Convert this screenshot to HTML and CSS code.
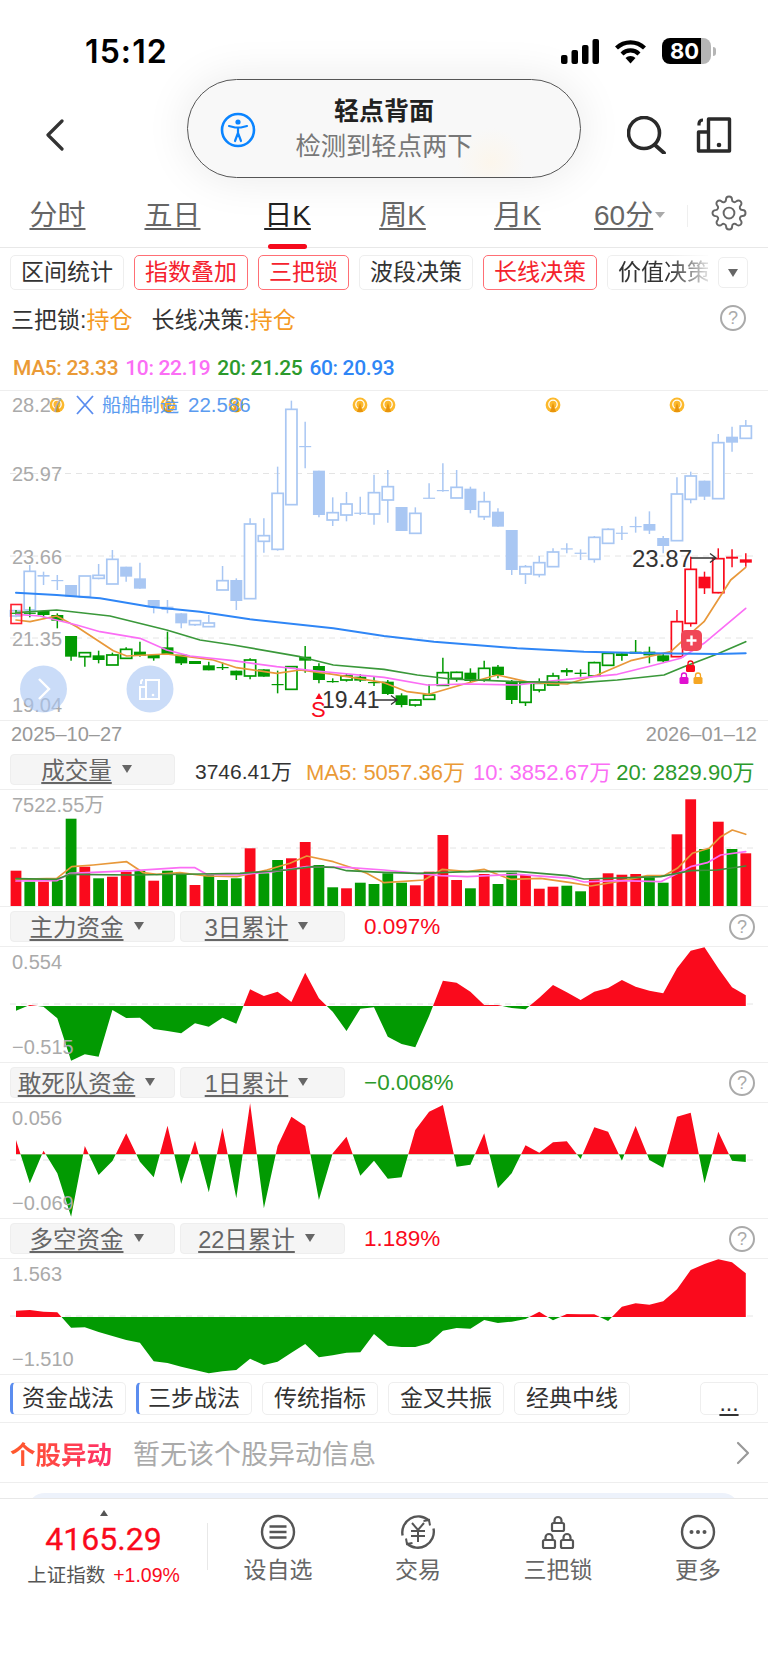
FILE: index.html
```html
<!DOCTYPE html>
<html lang="zh">
<head>
  <meta charset="UTF-8">
  <meta name="viewport" content="width=device-width, initial-scale=1.0">
  <link rel="stylesheet" href="styles.css">
</head>
<body>
  <div class="status-bar">
    <span class="time">15:12</span>
    <div class="status-icons">
      <svg width="38" height="25" viewBox="0 0 38 25"><rect x="0" y="16" width="6.5" height="9" rx="2"/><rect x="10.5" y="11" width="6.5" height="14" rx="2"/><rect x="21" y="6" width="6.5" height="19" rx="2"/><rect x="31.5" y="0" width="6.5" height="25" rx="2"/></svg>
      <svg width="33" height="25" viewBox="0 0 33 25"><path d="M2.5 9a20 20 0 0 1 28 0M8 15a12 12 0 0 1 17 0" fill="none" stroke="#000" stroke-width="4.2"/><path d="M11.5 19a7 7 0 0 1 10 0L16.5 24.5z"/></svg>
      <div class="battery"><div class="battery-body"><span>80</span></div><div class="battery-nub"></div></div>
    </div>
  </div>

  <div class="nav">
    <svg class="back" width="20" height="32" viewBox="0 0 20 32"><path d="M17 2L3 16l14 14" fill="none" stroke="#333" stroke-width="3.2" stroke-linecap="round" stroke-linejoin="round"/></svg>
    <div class="nav-right">
      <svg width="40" height="38" viewBox="0 0 40 38"><circle cx="17" cy="17" r="15.5" fill="none" stroke="#2a2a2a" stroke-width="3.6"/><path d="M28 29l9 8" stroke="#2a2a2a" stroke-width="3.8" stroke-linecap="round"/></svg>
      <svg width="36" height="36" viewBox="0 0 36 36"><path d="M12.5 2h21v32h-31V15h10zM12.5 15v19" fill="none" stroke="#2a2a2a" stroke-width="3.4" stroke-linejoin="round"/><path d="M3 8.5V6.5a4 4 0 0 1 4-3.5" fill="none" stroke="#2a2a2a" stroke-width="3.2"/><circle cx="23" cy="28" r="2.3" fill="#2a2a2a"/></svg>
    </div>
    <div class="pill">
      <svg class="pill-icon" width="36" height="36" viewBox="0 0 36 36"><circle cx="18" cy="18" r="16" fill="none" stroke="#0a84ff" stroke-width="2.6"/><circle cx="18" cy="10" r="2.6" fill="#0a84ff"/><path d="M9 14l6 1.5h6l6-1.5M18 15.5v6M18 21l-3 8M18 21l3 8" fill="none" stroke="#0a84ff" stroke-width="2.2" stroke-linecap="round"/></svg>
      <div class="pill-title">轻点背面</div>
      <div class="pill-sub">检测到轻点两下</div>
    </div>
  </div>

  <div class="tabs">
    <a class="tab">分时</a>
    <a class="tab">五日</a>
    <a class="tab tab-active">日K</a>
    <a class="tab">周K</a>
    <a class="tab">月K</a>
    <a class="tab tab-more">60分</a>
    <span class="tab-caret"></span>
    <span class="tab-sep"></span>
    <svg class="gear" width="36" height="36" viewBox="0 0 24 24" fill="none" stroke="#666" stroke-width="1.3"><circle cx="12" cy="12" r="3.6"/><path d="M19.4 15a1.65 1.65 0 0 0 .33 1.82l.06.06a2 2 0 0 1 0 2.83 2 2 0 0 1-2.83 0l-.06-.06a1.65 1.65 0 0 0-1.82-.33 1.65 1.65 0 0 0-1 1.51V21a2 2 0 0 1-2 2 2 2 0 0 1-2-2v-.09A1.65 1.65 0 0 0 9 19.4a1.65 1.65 0 0 0-1.82.33l-.06.06a2 2 0 0 1-2.83 0 2 2 0 0 1 0-2.83l.06-.06a1.65 1.65 0 0 0 .33-1.82 1.65 1.65 0 0 0-1.51-1H3a2 2 0 0 1-2-2 2 2 0 0 1 2-2h.09A1.65 1.65 0 0 0 4.6 9a1.65 1.65 0 0 0-.33-1.82l-.06-.06a2 2 0 0 1 0-2.83 2 2 0 0 1 2.83 0l.06.06a1.65 1.65 0 0 0 1.82.33H9a1.65 1.65 0 0 0 1-1.51V3a2 2 0 0 1 2-2 2 2 0 0 1 2 2v.09a1.65 1.65 0 0 0 1 1.51 1.65 1.65 0 0 0 1.82-.33l.06-.06a2 2 0 0 1 2.83 0 2 2 0 0 1 0 2.83l-.06.06a1.65 1.65 0 0 0-.33 1.82V9a1.65 1.65 0 0 0 1.51 1H21a2 2 0 0 1 2 2 2 2 0 0 1-2 2h-.09a1.65 1.65 0 0 0-1.51 1z"/></svg>
  </div>

  <div class="chips">
    <span class="chip">区间统计</span>
    <span class="chip chip-red">指数叠加</span>
    <span class="chip chip-red">三把锁</span>
    <span class="chip">波段决策</span>
    <span class="chip chip-red">长线决策</span>
    <span class="chip chip-fade">价值决策</span>
    <span class="chip-caret"><i class="tri"></i></span>
  </div>

  <div class="signals">
    <span>三把锁:<b>持仓</b></span>
    <span class="signal-gap">长线决策:<b>持仓</b></span>
    <span class="help help-top">?</span>
  </div>

  <div class="ma-row">
    <span class="c-orange">MA5: 23.33</span>
    <span class="c-pink">10: 22.19</span>
    <span class="c-green">20: 21.25</span>
    <span class="c-blue">60: 20.93</span>
  </div>

  <svg id="kline" class="plot plot-top" width="768" height="329" viewBox="0 391 768 329"></svg>

  <div class="dates"><span>2025–10–27</span><span>2026–01–12</span></div>

  <div class="panel-head">
    <span class="sel"><u>成交量</u><i class="tri"></i></span>
    <span class="vol-now">3746.41万</span>
    <span class="vol-ma c-orange">MA5: 5057.36万</span>
    <span class="vol-ma c-pink">10: 3852.67万</span>
    <span class="vol-ma c-green">20: 2829.90万</span>
  </div>
  <svg id="volume" class="plot" width="768" height="116" viewBox="0 790 768 116"></svg>

  <div class="panel-head">
    <span class="sel"><u>主力资金</u><i class="tri"></i></span>
    <span class="sel"><u>3日累计</u><i class="tri"></i></span>
    <span class="pct c-red">0.097%</span>
    <span class="help">?</span>
  </div>
  <svg id="fund1" class="plot" width="768" height="115" viewBox="0 947 768 115"></svg>

  <div class="panel-head">
    <span class="sel"><u>敢死队资金</u><i class="tri"></i></span>
    <span class="sel"><u>1日累计</u><i class="tri"></i></span>
    <span class="pct c-green">−0.008%</span>
    <span class="help">?</span>
  </div>
  <svg id="fund2" class="plot" width="768" height="115" viewBox="0 1103 768 115"></svg>

  <div class="panel-head">
    <span class="sel"><u>多空资金</u><i class="tri"></i></span>
    <span class="sel"><u>22日累计</u><i class="tri"></i></span>
    <span class="pct c-red">1.189%</span>
    <span class="help">?</span>
  </div>
  <svg id="fund3" class="plot" width="768" height="115" viewBox="0 1259 768 115"></svg>

  <div class="strategies">
    <span class="chip chip-mark">资金战法</span>
    <span class="chip chip-mark">三步战法</span>
    <span class="chip">传统指标</span>
    <span class="chip">金叉共振</span>
    <span class="chip">经典中线</span>
    <span class="chip chip-dots"><u>...</u></span>
  </div>

  <div class="news">
    <span class="news-title">个股异动</span>
    <span class="news-msg">暂无该个股异动信息</span>
    <svg class="news-arrow" width="14" height="24" viewBox="0 0 14 24"><path d="M2 2l10 10L2 22" fill="none" stroke="#999" stroke-width="2.2" stroke-linecap="round" stroke-linejoin="round"/></svg>
  </div>

  <div class="peek-wrap"><div class="peek"></div></div>

  <div class="bottom-bar">
    <div class="index-box">
      <i class="index-up"></i>
      <div class="index-value">4165.29</div>
      <div class="index-name">上证指数<span class="c-red">+1.09%</span></div>
    </div>
    <span class="bar-sep"></span>
    <div class="bar-item">
      <svg width="36" height="36" viewBox="0 0 36 36" fill="none" stroke="#555" stroke-width="2.4"><circle cx="18" cy="18" r="16"/><path d="M9.5 12.5h17M9.5 18h17M9.5 23.5h17"/></svg>
      <span>设自选</span>
    </div>
    <div class="bar-item">
      <svg width="36" height="36" viewBox="0 0 36 36" fill="none" stroke="#555" stroke-width="2.4"><path d="M2.6 21.5A16 16 0 0 1 29 6.5M33.5 14.5A16 16 0 0 1 7 29.5"/><path d="M30 11.5l-1-5.5-5.5 1M6 24.5l1 5.5 5.5-1M12 9l6 7 6-7M11 17h14M11 22h14M18 16v12" stroke-width="2"/></svg>
      <span>交易</span>
    </div>
    <div class="bar-item">
      <svg width="36" height="36" viewBox="0 0 36 36" fill="none" stroke="#555" stroke-width="2.2"><rect x="12" y="9" width="12" height="8" rx="1.5"/><path d="M14.5 9V6.5a3.5 3.5 0 0 1 7 0V9"/><rect x="3" y="26" width="12" height="8" rx="1.5"/><path d="M5.5 26v-2.5a3.5 3.5 0 0 1 7 0V26"/><rect x="21" y="26" width="12" height="8" rx="1.5"/><path d="M23.5 26v-2.5a3.5 3.5 0 0 1 7 0V26"/></svg>
      <span>三把锁</span>
    </div>
    <div class="bar-item">
      <svg width="36" height="36" viewBox="0 0 36 36" fill="none" stroke="#555" stroke-width="2.4"><circle cx="18" cy="18" r="16"/><circle cx="11.5" cy="18" r="2" fill="#555" stroke="none"/><circle cx="18" cy="18" r="2" fill="#555" stroke="none"/><circle cx="24.5" cy="18" r="2" fill="#555" stroke="none"/></svg>
      <span>更多</span>
    </div>
  </div>

  <script src="chart.js"></script>
</body>
</html>
```

FILE: styles.css
```css
* {
  box-sizing: border-box;
}
body {
  margin: 0;
  width: 768px;
  height: 1663px;
  overflow: hidden;
  background: #ffffff;
  color: #333333;
  font-family: "Liberation Sans", "Noto Sans CJK SC", sans-serif;
}
u {
  text-decoration-thickness: 2px;
  text-underline-offset: 3px;
}

/* colours shared by legends */
.c-orange { color: #ea9a36; }
.c-pink { color: #fb6ef5; }
.c-green { color: #2c9a2c; }
.c-blue { color: #2f86f6; }
.c-red { color: #fa0a1c; }

.status-bar {
  display: flex;
  justify-content: space-between;
  align-items: center;
  height: 78px;
  padding: 24px 52px 0 85px;
}
.time {
  font-family: Inter, sans-serif;
  font-size: 32px;
  font-weight: 600;
  color: #000000;
  letter-spacing: 1.1px;
}
.status-icons {
  display: flex;
  align-items: center;
  gap: 15px;
}
.battery {
  display: flex;
  align-items: center;
}
.battery-body {
  width: 49px;
  height: 26px;
  border-radius: 8px;
  background: linear-gradient(90deg, #000000 80%, #b5b5b5 80%);
  color: #ffffff;
  font-family: Inter, sans-serif;
  font-size: 22px;
  font-weight: 700;
  line-height: 26px;
  padding-left: 8px;
}
.battery-nub {
  width: 3px;
  height: 9px;
  margin-left: 2px;
  border-radius: 0 3px 3px 0;
  background: #b5b5b5;
}

.nav {
  position: relative;
  height: 108px;
  display: flex;
  justify-content: space-between;
  align-items: center;
  padding: 6px 36px 0 45px;
}
.nav-right {
  display: flex;
  align-items: center;
  gap: 29px;
}
.pill {
  position: absolute;
  top: 1px;
  left: 187px;
  width: 394px;
  height: 99px;
  padding-top: 14px;
  border: 1px solid #555555;
  border-radius: 50px;
  text-align: center;
  line-height: 35px;
  background: radial-gradient(circle at 303px 82px, #fcf6ec 0, #f8f8f8 34px);
  box-shadow: 0 0 46px rgba(0, 0, 0, 0.09);
}
.pill-icon {
  position: absolute;
  left: 32px;
  top: 32px;
}
.pill-title {
  color: #222222;
  font-size: 25px;
  font-weight: 700;
}
.pill-sub {
  color: #777777;
  font-size: 25.3px;
}

.tabs {
  position: relative;
  display: flex;
  align-items: flex-start;
  height: 62px;
  padding-top: 13px;
  border-bottom: 1px solid #e8e8e8;
}
.tab {
  width: 115px;
  text-align: center;
  font-size: 28px;
  line-height: 34px;
  color: #666666;
  text-decoration: underline;
  text-decoration-thickness: 2px;
  text-underline-offset: 3px;
}
.tab-active {
  color: #222222;
}
.tab-active::after {
  content: "";
  position: absolute;
  left: 268px;
  bottom: -2px;
  width: 39px;
  height: 5px;
  border-radius: 3px;
  background: #f50a1c;
}
.tab-more {
  width: auto;
  margin-left: 19px;
}
.tab-caret {
  width: 0;
  height: 0;
  margin: 13px 0 0 2px;
  border: 5px solid transparent;
  border-top: 6px solid #aaaaaa;
}
.tab-sep {
  width: 1px;
  height: 22px;
  margin: 6px 0 0 22px;
  background: #efefef;
}
.gear {
  margin: -4px 0 0 23px;
}

.chips {
  display: flex;
  align-items: center;
  gap: 10px;
  height: 50px;
  padding: 7px 0 8px 10px;
}
.chip {
  display: block;
  padding: 0 10px;
  border: 1px solid #eeeeee;
  border-radius: 5px;
  font-size: 23px;
  line-height: 33px;
  color: #333333;
  white-space: nowrap;
}
.chip-red {
  border-color: #ff6f75;
  color: #f5222d;
}
.chip-fade {
  width: 101px;
  overflow: hidden;
  border-right: 0;
  border-radius: 5px 0 0 5px;
  -webkit-mask-image: linear-gradient(90deg, #000 62%, rgba(0, 0, 0, 0.15) 100%);
  mask-image: linear-gradient(90deg, #000 62%, rgba(0, 0, 0, 0.15) 100%);
}
.chip-caret {
  display: flex;
  justify-content: center;
  align-items: center;
  width: 30px;
  height: 31px;
  border: 1px solid #eeeeee;
  border-radius: 5px;
}
.tri {
  display: inline-block;
  width: 0;
  height: 0;
  border-left: 5px solid transparent;
  border-right: 5px solid transparent;
  border-top: 8px solid #666666;
}

.signals {
  display: flex;
  align-items: center;
  height: 42px;
  padding: 0 22px 2px 11px;
  font-size: 23px;
  color: #333333;
}
.signals b {
  font-weight: normal;
  color: #f59a23;
}
.signal-gap {
  margin-left: 19px;
}
.help {
  display: block;
  width: 26px;
  height: 26px;
  margin-left: auto;
  margin-right: 13px;
  border: 2px solid #aaaaaa;
  border-radius: 50%;
  text-align: center;
  font-size: 18px;
  line-height: 22px;
  color: #aaaaaa;
}
.help-top {
  margin-right: 0;
}

.ma-row {
  display: flex;
  gap: 7px;
  height: 51px;
  padding: 16px 0 0 13px;
  font-family: Roboto, sans-serif;
  font-size: 21px;
  font-weight: 500;
  letter-spacing: -0.35px;
  line-height: 24px;
}

.plot {
  display: block;
  border-bottom: 1px solid #eeeeee;
  box-sizing: content-box;
}
.plot-top {
  border-top: 1px solid #eeeeee;
  margin-top: -1px;
}

.dates {
  display: flex;
  justify-content: space-between;
  height: 29px;
  padding: 1px 11px 0 11px;
  font-size: 20px;
  line-height: 24px;
  color: #999999;
}

.panel-head {
  display: flex;
  align-items: center;
  gap: 5px;
  height: 40px;
  padding: 4px 0 4px 10px;
  border-bottom: 1px solid #eeeeee;
}
.sel {
  display: flex;
  justify-content: center;
  align-items: center;
  gap: 10px;
  width: 165px;
  height: 31px;
  padding: 0 12px 2px 0;
  border: 1px solid #eeeeee;
  border-radius: 4px;
  background: #f5f5f5;
  font-size: 23.5px;
  color: #666666;
}
.vol-now {
  margin-left: 15px;
  font-size: 21px;
  color: #333333;
}
.vol-ma {
  font-size: 22px;
}
.vol-now + .vol-ma {
  margin: 0 3px 0 9px;
}
.pct {
  margin-left: 14px;
  font-size: 22.5px;
}

.strategies {
  display: flex;
  gap: 10px;
  height: 48px;
  padding: 7px 10px 0 10px;
  border-bottom: 1px solid #eeeeee;
}
.strategies .chip {
  height: 33px;
  padding: 0 11px;
  line-height: 30px;
}
.strategies .chip-mark {
  border-left: 3px solid #5b8def;
  padding-left: 9px;
}
.strategies .chip-dots {
  margin-left: auto;
  width: 58px;
  text-align: center;
  padding: 0;
  line-height: 40px;
}

.news {
  display: flex;
  align-items: center;
  height: 60px;
  padding: 0 18px 0 10px;
  border-bottom: 1px solid #eeeeee;
}
.news-title {
  font-size: 25.5px;
  font-weight: 700;
  background: linear-gradient(90deg, #ff5a2a, #ff2e6a);
  -webkit-background-clip: text;
  background-clip: text;
  color: transparent;
}
.news-msg {
  margin-left: 21px;
  font-size: 27px;
  color: #aaaaaa;
}
.news-arrow {
  margin-left: auto;
}

.peek-wrap {
  height: 15px;
  padding: 10px 28px 0 27px;
  overflow: hidden;
}
.peek {
  height: 40px;
  border-radius: 18px;
  background: #edf2fb;
}

.bottom-bar {
  position: relative;
  display: flex;
  height: 165px;
  border-top: 1px solid #e8e8e8;
  background: #ffffff;
}
.index-box {
  width: 207px;
  padding-top: 11px;
  text-align: center;
}
.index-up {
  display: block;
  width: 0;
  height: 0;
  margin: 0 auto;
  border-left: 4px solid transparent;
  border-right: 4px solid transparent;
  border-bottom: 6px solid #555555;
}
.index-value {
  margin-top: 4px;
  font-family: Roboto, sans-serif;
  font-size: 32px;
  font-weight: 400;
  -webkit-text-stroke: 0.3px #fa0a1c;
  line-height: 38px;
  color: #fa0a1c;
}
.index-name {
  margin-top: 4px;
  font-size: 19.5px;
  line-height: 26px;
  color: #555555;
}
.index-name span {
  margin-left: 8px;
}
.bar-sep {
  width: 1px;
  height: 47px;
  margin-top: 24px;
  background: #e8e8e8;
}
.bar-item {
  display: flex;
  flex-direction: column;
  align-items: center;
  width: 140px;
  padding-top: 15px;
  font-size: 23px;
  line-height: 28px;
  color: #666666;
}
.bar-item svg {
  margin-bottom: 6px;
}
```

FILE: chart.js
```js
// chart values below were read off the picture at 3x, so y = base + value / 3
var STEP = 13.77;
var RED = '#fa0a1c', GREEN = '#029a02', SKY = '#a9c7f3';
var GRAY = '#aaaaaa';

function X(i) { return 16 + STEP * i; }

function polyline(points, base, color, width) {
  var pts = points.map(function (p) { return (p[0] / 3).toFixed(1) + ',' + (base + p[1] / 3).toFixed(1); });
  return '<polyline points="' + pts.join(' ') + '" fill="none" stroke="' + color + '" stroke-width="' + width + '" stroke-linejoin="round" stroke-linecap="round"/>';
}

function grid(y) {
  return '<line x1="10" x2="754" y1="' + y + '" y2="' + y + '" stroke="#e4e4e4" stroke-width="1" stroke-dasharray="6 5"/>';
}

function label(x, y, text, color, size, extra) {
  return '<text x="' + x + '" y="' + y + '" fill="' + (color || GRAY) + '" font-size="' + (size || 20) + '" ' + (extra || '') + '>' + text + '</text>';
}

// one candle: [high, low, top, bottom, kind]  kind: 'o' hollow, 'f' filled
function candle(i, c, color) {
  var base = 380, x = X(i);
  var hi = base + c[0] / 3, lo = base + c[1] / 3, top = base + c[2] / 3, bot = base + c[3] / 3;
  var s = '<line x1="' + x + '" x2="' + x + '" y1="' + hi + '" y2="' + lo + '" stroke="' + color + '" stroke-width="1.5"/>';
  if (c[4] == 'o') {
    s += '<rect x="' + (x - 5.6) + '" y="' + top + '" width="11.2" height="' + (bot - top) + '" fill="#fff" stroke="' + color + '" stroke-width="1.7"/>';
  } else {
    s += '<rect x="' + (x - 6) + '" y="' + top + '" width="12" height="' + Math.max(bot - top, 1.2) + '" fill="' + color + '"/>';
  }
  return s;
}

var skyCandles = [
  [690, 712, 692, 708, 'o'], [555, 712, 574, 690, 'o'], [575, 615, 585, 590, 'f'], [585, 630, 600, 601, 'f'],
  [615, 650, 615, 650, 'f'], [588, 650, 588, 650, 'o'], [552, 598, 586, 595, 'o'], [510, 612, 538, 612, 'o'],
  [560, 605, 560, 590, 'f'], [548, 626, 595, 626, 'f'], [660, 700, 660, 680, 'f'], [660, 700, 680, 690, 'f'],
  [700, 745, 700, 730, 'f'], [722, 738, 722, 734, 'o'], [705, 740, 729, 740, 'o'], [558, 630, 602, 630, 'o'],
  [595, 690, 600, 663, 'f'], [415, 656, 432, 656, 'o'], [415, 518, 467, 484, 'o'], [260, 512, 340, 508, 'o'],
  [62, 374, 88, 374, 'o'], [125, 265, 198, 199, 'f'], [272, 412, 272, 405, 'f'], [352, 438, 398, 420, 'o'],
  [336, 424, 372, 405, 'o'], [350, 405, 398, 399, 'f'], [284, 434, 338, 402, 'o'], [270, 428, 320, 360, 'o'],
  [381, 453, 381, 453, 'f'], [382, 460, 400, 460, 'o'], [310, 354, 353, 354, 'f'], [250, 335, 330, 331, 'f'],
  [270, 354, 322, 354, 'o'], [320, 400, 326, 390, 'f'], [335, 420, 365, 410, 'o'], [385, 440, 395, 440, 'f'],
  [450, 585, 450, 570, 'f'], [555, 612, 560, 582, 'o'], [528, 592, 548, 584, 'o'], [505, 560, 516, 560, 'o'],
  [490, 520, 505, 506, 'f'], [508, 540, 518, 519, 'f'], [468, 548, 472, 538, 'o'], [445, 490, 448, 490, 'o'],
  [438, 480, 458, 459, 'f'], [410, 458, 438, 439, 'f'], [394, 462, 432, 452, 'f'], [468, 520, 474, 498, 'f'],
  [292, 482, 342, 482, 'o'], [275, 370, 288, 358, 'o'], [302, 360, 302, 350, 'f'], [162, 356, 188, 356, 'o'],
  [140, 215, 170, 188, 'f'], [120, 175, 138, 175, 'o']
];

var mainCandles = [
  [690, 705, 698, 700, 'f'], [680, 712, 698, 700, 'f'], [692, 712, 693, 705, 'f'], [700, 745, 705, 722, 'f'],
  [768, 842, 768, 830, 'f'], [818, 860, 818, 830, 'o'], [812, 850, 826, 840, 'f'], [818, 855, 825, 855, 'o'],
  [802, 835, 808, 835, 'o'], [785, 830, 815, 828, 'f'], [825, 842, 825, 835, 'f'], [755, 822, 802, 822, 'f'],
  [824, 855, 824, 850, 'f'], [843, 852, 843, 852, 'f'], [845, 871, 856, 871, 'f'], [848, 870, 861, 863, 'f'],
  [872, 900, 872, 886, 'f'], [835, 898, 840, 888, 'o'], [868, 890, 868, 890, 'f'], [872, 940, 912, 915, 'f'],
  [858, 928, 860, 928, 'o'], [798, 878, 830, 842, 'f'], [850, 910, 858, 900, 'f'], [895, 908, 903, 905, 'f'],
  [880, 905, 888, 900, 'o'], [882, 906, 890, 902, 'f'], [888, 918, 906, 909, 'f'], [900, 945, 905, 942, 'f'],
  [940, 982, 946, 975, 'f'], [958, 980, 960, 975, 'o'], [912, 958, 945, 958, 'o'], [833, 916, 878, 916, 'o'],
  [875, 905, 877, 895, 'o'], [865, 908, 878, 903, 'f'], [842, 905, 865, 900, 'o'], [855, 895, 860, 885, 'f'],
  [900, 972, 905, 960, 'f'], [905, 978, 908, 967, 'o'], [895, 937, 910, 930, 'o'], [878, 915, 888, 915, 'o'],
  [865, 888, 870, 877, 'f'], [868, 890, 878, 882, 'f'], [845, 888, 848, 888, 'o'], [818, 856, 820, 856, 'o'],
  [818, 842, 820, 828, 'f'], [780, 822, 815, 822, 'f'], [800, 850, 815, 826, 'f'], [820, 846, 826, 844, 'f']
];

var redCandles = [
  [690, 830, 725, 830, 'o'], [530, 740, 568, 730, 'o'], [575, 642, 590, 625, 'f'],
  [505, 640, 536, 638, 'o'], [508, 562, 530, 536, 'f'], [520, 560, 538, 548, 'f']
];

// the right half of each line was read from a second crop, hence the +1152
function shift(points) {
  return points.map(function (p) { return [p[0] + 1152, p[1]]; });
}

function drawKline() {
  var s = grid(473.5) + grid(556) + grid(638);
  skyCandles.forEach(function (c, i) { s += candle(i, c, SKY); });
  mainCandles.forEach(function (c, i) { s += candle(i, c, GREEN); });
  redCandles.forEach(function (c, i) { s += candle(i + 48, c, RED); });

  s += polyline([[48, 720], [90, 725], [170, 708], [230, 740], [340, 812], [380, 828], [500, 822], [640, 840], [710, 863], [830, 880], [900, 870], [1000, 883], [1152, 908]].concat(shift([[70, 935], [135, 943], [230, 915], [340, 885], [440, 908], [550, 912], [640, 885], [740, 842], [860, 815], [920, 760], [960, 725], [1040, 600], [1085, 562]])), 380, '#e8983a', 1.7);
  s += polyline([[48, 703], [120, 708], [230, 735], [300, 755], [420, 775], [500, 810], [570, 828], [700, 842], [830, 860], [950, 873], [1152, 892]].concat(shift([[130, 915], [250, 912], [400, 915], [500, 903], [600, 893], [700, 883], [800, 858], [890, 835], [960, 790], [1085, 685]])), 380, '#fb6ef5', 1.7);
  s += polyline([[48, 698], [170, 690], [330, 708], [500, 750], [600, 780], [700, 795], [900, 830], [1000, 855], [1152, 868]].concat(shift([[100, 885], [200, 897], [400, 905], [590, 908], [700, 900], [840, 885], [900, 860], [1000, 822], [1085, 785]])), 380, '#3a983a', 1.7);
  s += polyline([[48, 638], [170, 645], [300, 655], [450, 680], [600, 695], [750, 718], [1000, 745], [1152, 768]].concat(shift([[150, 785], [400, 805], [600, 815], [800, 820], [1000, 822], [1085, 820]])), 380, '#2f86f6', 2);

  // first candle marker
  s += '<rect x="11" y="604.5" width="10.5" height="19" fill="none" stroke="#ff2030" stroke-width="1.6"/>';

  [57, 168, 236, 360, 388, 553, 677].forEach(function (x) { s += alertIcon(x, 405); });

  // price axis
  s += label(12, 412, '28.27') + label(12, 481, '25.97') + label(12, 564, '23.66') + label(12, 646, '21.35') + label(12, 712, '19.04');

  // compared stock
  s += '<path d="M77 396l16 18M93 396l-16 18" stroke="#5b8def" stroke-width="1.8"/>';
  s += label(102, 412, '船舶制造', '#5b9bf0', 19.3) + label(188, 412, '22.586', '#5b9bf0', 20.5);

  // floating round buttons
  s += '<circle cx="43.5" cy="689" r="23.5" fill="#a9c7f3" fill-opacity="0.62"/>';
  s += '<path d="M39 679l10 10-10 10" fill="none" stroke="#fff" stroke-width="2.4"/>';
  s += '<circle cx="150" cy="689" r="23.5" fill="#a9c7f3" fill-opacity="0.62"/>';
  s += '<path d="M146 680h13v19h-19v-12h6zM146 687v12M141 684v-2a2 2 0 0 1 2-2" fill="none" stroke="#fff" stroke-width="2"/><circle cx="153" cy="695" r="1.3" fill="#fff"/>';

  // low and high notes
  s += '<path d="M319 693l-3.6 6h7.2z" fill="' + RED + '"/>' + label(311, 717, 'S', RED, 22);
  s += label(322, 708, '19.41', '#333', 23);
  s += '<path d="M373 700h24M391 695.5l6 4.5-6 4.5" fill="none" stroke="#333" stroke-width="1.3"/>';
  s += label(632, 567, '23.87', '#333', 24);
  s += '<path d="M691 558h25M710 553.5l6 4.5-6 4.5" fill="none" stroke="#333" stroke-width="1.3"/>';

  // plus button and the three locks
  s += '<rect x="681" y="630" width="21" height="21" rx="5" fill="#f04656"/><path d="M691.5 635.5v10M686.5 640.5h10" stroke="#fff" stroke-width="2.4"/>';
  s += lockIcon(690.5, 663, RED) + lockIcon(684, 675, '#e010d0') + lockIcon(698, 675, '#f5a623');

  document.getElementById('kline').innerHTML = s;
}

function alertIcon(x, y) {
  return '<circle cx="' + x + '" cy="' + y + '" r="7.4" fill="#fcb92c"/>' +
    '<circle cx="' + x + '" cy="' + (y - 0.6) + '" r="4.2" fill="#fcb92c" stroke="#fff" stroke-width="1.3"/>' +
    '<path d="M' + (x - 3) + ' ' + (y + 7) + 'L' + x + ' ' + (y - 2.2) + 'L' + (x + 3) + ' ' + (y + 7) + 'z" fill="#e8940c"/>';
}

function lockIcon(x, y, color) {
  return '<rect x="' + (x - 4.5) + '" y="' + (y + 2) + '" width="9" height="7" rx="1.5" fill="' + color + '"/>' +
    '<path d="M' + (x - 2.5) + ' ' + (y + 3) + 'v-2.5a2.5 2.5 0 0 1 5 0v2.5" fill="none" stroke="' + color + '" stroke-width="1.3"/>';
}

function drawVolume() {
  var bars = [
    ['r', 392], ['g', 425], ['r', 425], ['g', 420], ['g', 236], ['r', 380], ['g', 415], ['r', 410], ['r', 395],
    ['g', 392], ['r', 422], ['g', 392], ['g', 400], ['r', 435], ['g', 405], ['g', 420], ['g', 415], ['r', 325],
    ['g', 400], ['g', 360], ['r', 355], ['r', 306], ['g', 375], ['g', 442], ['r', 445], ['g', 428], ['g', 432],
    ['g', 400], ['g', 428], ['r', 436], ['r', 395], ['r', 285], ['r', 420], ['g', 445], ['r', 402], ['g', 432],
    ['g', 398], ['r', 405], ['r', 446], ['r', 440], ['g', 437], ['g', 454], ['r', 418], ['r', 400], ['r', 404],
    ['r', 402], ['g', 412], ['g', 428], ['r', 283], ['r', 178], ['g', 327], ['r', 245], ['g', 327], ['r', 340]
  ];
  var s = grid(848);
  bars.forEach(function (b, i) {
    var top = 740 + b[1] / 3;
    s += '<rect x="' + (X(i) - 5.4).toFixed(1) + '" y="' + top.toFixed(1) + '" width="10.8" height="' + (906 - top).toFixed(1) + '" fill="' + (b[0] == 'r' ? RED : GREEN) + '"/>';
  });
  s += polyline([[48, 418], [170, 415], [215, 380], [280, 375], [380, 365], [430, 398], [470, 403], [540, 398], [620, 408], [710, 410], [800, 390], [870, 370], [920, 348], [1000, 365], [1060, 385], [1100, 400], [1152, 428]].concat(shift([[120, 420], [175, 388], [250, 395], [300, 388], [380, 418], [470, 415], [560, 428], [620, 438], [700, 425], [790, 407], [840, 407], [880, 385], [925, 340], [975, 325], [1010, 290], [1045, 270], [1085, 283]])), 740, '#e8983a', 1.7);
  s += polyline([[48, 423], [170, 422], [210, 400], [400, 392], [540, 383], [585, 383], [620, 403], [710, 405], [820, 395], [920, 380], [1040, 382], [1152, 390]].concat(shift([[100, 400], [170, 407], [250, 410], [400, 403], [560, 415], [600, 426], [700, 422], [830, 425], [920, 380], [970, 368], [1010, 345], [1085, 335]])), 740, '#fb6ef5', 1.7);
  s += polyline([[48, 416], [170, 418], [210, 403], [400, 405], [600, 402], [720, 400], [860, 390], [940, 380], [1000, 382], [1040, 392], [1152, 397]].concat(shift([[100, 400], [250, 395], [400, 394], [550, 407], [600, 417], [830, 410], [920, 392], [1000, 390], [1085, 378]])), 740, '#3a8f3a', 1.7);
  s += label(12, 812, '7522.55万');
  document.getElementById('volume').innerHTML = s;
}

function drawArea(id, values, base, zero, gridY, labels) {
  var zeroY = base + zero / 3;
  var pts = values.map(function (v, i) { return X(i).toFixed(1) + ',' + (base + v / 3).toFixed(1); });
  var shape = X(0) + ',' + zeroY + ' ' + pts.join(' ') + ' ' + X(53) + ',' + zeroY;
  var s = grid(gridY);
  s += '<clipPath id="' + id + 'up"><rect x="0" y="0" width="768" height="' + zeroY + '"/></clipPath>';
  s += '<clipPath id="' + id + 'down"><rect x="0" y="' + zeroY + '" width="768" height="1663"/></clipPath>';
  s += '<polygon points="' + shape + '" fill="' + RED + '" clip-path="url(#' + id + 'up)"/>';
  s += '<polygon points="' + shape + '" fill="' + GREEN + '" clip-path="url(#' + id + 'down)"/>';
  s += label(12, labels[0][0], labels[0][1]) + label(12, labels[1][0], labels[1][1]);
  document.getElementById(id).innerHTML = s;
}

drawKline();
drawVolume();

drawArea('fund1', [812, 795, 800, 835, 962, 943, 950, 810, 834, 833, 867, 873, 880, 850, 860, 833, 851, 748, 768, 755, 786, 698, 775, 815, 873, 806, 802, 890, 912, 922, 828, 722, 728, 755, 795, 795, 804, 808, 773, 735, 757, 780, 755, 744, 720, 740, 752, 760, 685, 632, 622, 685, 742, 766],
  740, 798, 1004, [[969, '0.554'], [1054, '−0.515']]);

drawArea('fund2', [240, 370, 272, 340, 470, 258, 345, 303, 220, 305, 352, 197, 372, 242, 397, 203, 415, 130, 445, 258, 170, 198, 420, 280, 230, 347, 302, 356, 352, 210, 155, 135, 320, 314, 220, 385, 340, 256, 278, 247, 244, 297, 202, 215, 302, 198, 300, 323, 170, 158, 370, 215, 302, 306],
  1060, 283, 1160, [[1125, '0.056'], [1210, '−0.069']]);

drawArea('fund3', [752, 750, 755, 757, 803, 802, 816, 828, 840, 848, 904, 909, 920, 930, 940, 934, 930, 896, 915, 905, 878, 852, 892, 886, 878, 877, 822, 857, 861, 861, 850, 812, 804, 806, 780, 789, 785, 777, 755, 781, 762, 763, 763, 783, 740, 730, 734, 724, 688, 630, 612, 598, 607, 640],
  1060, 771, 1316, [[1281, '1.563'], [1366, '−1.510']]);
```
